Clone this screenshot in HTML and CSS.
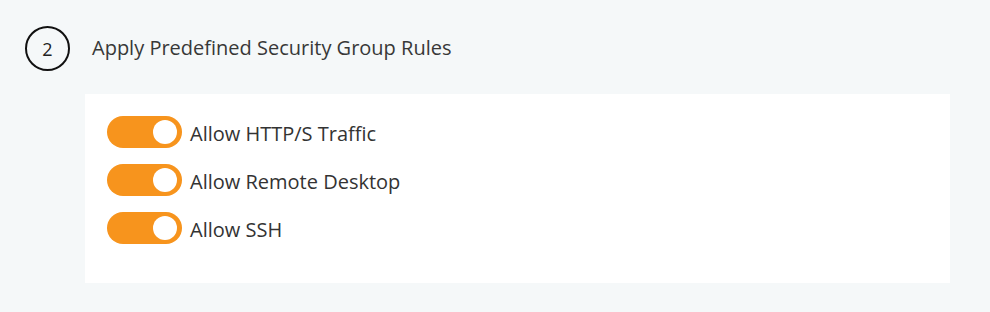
FILE: index.html
```html
<!DOCTYPE html>
<html>
<head>
<meta charset="utf-8">
<link rel="stylesheet" href="styles.css">
</head>
<body>
<div class="step">
  <div class="step-head">
    <div class="step-num">2</div>
    <div class="step-title">Apply Predefined Security Group Rules</div>
  </div>
  <div class="card">
    <label class="row"><span class="toggle"><span class="knob"></span></span><span class="label">Allow HTTP/S Traffic</span></label>
    <label class="row"><span class="toggle"><span class="knob"></span></span><span class="label">Allow Remote Desktop</span></label>
    <label class="row"><span class="toggle"><span class="knob"></span></span><span class="label">Allow SSH</span></label>
  </div>
</div>
</body>
</html>
```
FILE: styles.css
```css
html, body {
  margin: 0;
  padding: 0;
  background: #f5f8f9;
  font-family: "Open Sans", "Noto Sans", sans-serif;
  color: #333;
}
.step {
  padding: 26px 40px 29px 25px;
}
.step-head {
  display: flex;
  align-items: center;
  height: 45px;
}
.step-num {
  box-sizing: border-box;
  width: 45px;
  height: 45px;
  border: 2px solid #111;
  border-radius: 50%;
  display: flex;
  align-items: center;
  justify-content: center;
  font-size: 18px;
  color: #222;
}
.step-title {
  margin-left: 22px;
  font-size: 20px;
  color: #383838;
  position: relative;
  top: -1px;
}
.card {
  margin: 23px 0 0 60px;
  background: #fff;
  padding: 22px 22px 39px 22px;
  display: flex;
  flex-direction: column;
  gap: 16px;
}
.row {
  display: flex;
  align-items: center;
  height: 32px;
}
.toggle {
  width: 75px;
  height: 32px;
  border-radius: 16px;
  background: #f7941d;
  display: flex;
  align-items: center;
  justify-content: flex-end;
  padding-right: 5px;
  box-sizing: border-box;
}
.knob {
  width: 24px;
  height: 24px;
  border-radius: 50%;
  background: #fff;
}
.label {
  margin-left: 8px;
  font-size: 20px;
  color: #333;
  position: relative;
  top: 1px;
}
```
